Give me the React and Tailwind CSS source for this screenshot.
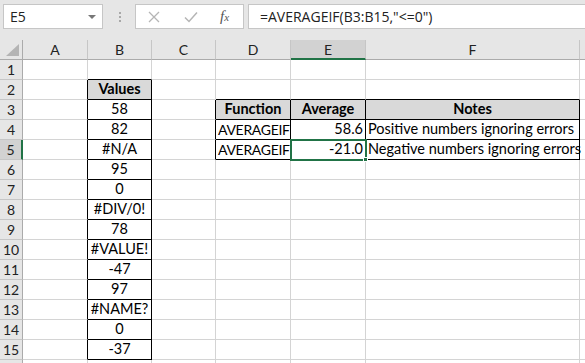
import React from 'react';

// column widths include the 1px right gridline
const COLS = [
  { k: 'A', w: 65 },
  { k: 'B', w: 64 },
  { k: 'C', w: 64 },
  { k: 'D', w: 75 },
  { k: 'E', w: 75 },
  { k: 'F', w: 214 },
];

const VALUES = ['58', '82', '#N/A', '95', '0', '#DIV/0!', '78', '#VALUE!', '-47', '97', '#NAME?', '0', '-37'];

// cells keyed "row-col" (col 0 = A)
const CELLS = {
  '2-1': { v: 'Values', head: true },
  '3-3': { v: 'Function', head: true },
  '3-4': { v: 'Average', head: true },
  '3-5': { v: 'Notes', head: true },
  '4-3': { v: 'AVERAGEIF', align: 'left', tight: true },
  '4-4': { v: '58.6', align: 'right' },
  '4-5': { v: 'Positive numbers ignoring errors', align: 'left' },
  '5-3': { v: 'AVERAGEIF', align: 'left', tight: true },
  '5-4': { v: '-21.0', align: 'right' },
  '5-5': { v: 'Negative numbers ignoring errors', align: 'left' },
};
VALUES.forEach((v, i) => {
  CELLS[`${i + 3}-1`] = { v, align: 'center' };
});

const inBox = (r, c) =>
  (c === 1 && r >= 2 && r <= 15) || (c >= 3 && c <= 5 && r >= 3 && r <= 5);

const ROWS = Array.from({ length: 16 }, (_, i) => i + 1);

function Cell({ r, c, w }) {
  const cell = CELLS[`${r}-${c}`];
  const right = inBox(r, c) || inBox(r, c + 1);
  const bottom = inBox(r, c) || inBox(r + 1, c);
  const selected = r === 5 && c === 4;

  let align = 'justify-center';
  if (cell?.align === 'left') align = 'justify-start';
  if (cell?.align === 'right') align = 'justify-end';

  return (
    <div
      className={`relative flex h-[20px] shrink-0 items-center border-r border-b px-[2px] ${align} ${
        right ? 'border-r-black' : 'border-r-[#d4d4d4]'
      } ${bottom ? 'border-b-black' : 'border-b-[#d4d4d4]'} ${cell?.head ? 'bg-[#d9d9d9] font-bold' : 'bg-white'}`}
      style={{ width: w }}
    >
      {cell && (
        <span className={`whitespace-nowrap leading-none ${cell.tight ? 'text-[14px] tracking-[-0.3px]' : ''}`}>
          {cell.v}
        </span>
      )}
      {selected && (
        <div className="absolute -left-[1px] -top-[1px] z-10 h-[22px] w-[77px] border-2 border-[#217346]">
          <div className="absolute -bottom-[3px] -right-[3px] h-[5px] w-[5px] border border-white bg-[#217346]" />
        </div>
      )}
    </div>
  );
}

export default function App() {
  return (
    <div className="h-[363px] w-[585px] overflow-hidden bg-[#e6e6e6]" style={{ fontFamily: 'Lato, sans-serif' }}>
      {/* Formula bar */}
      <div className="flex h-[40px] items-start pt-[4px] text-[14px]" style={{ fontFamily: '"Open Sans", sans-serif' }}>
        <div className="ml-[3px] flex h-[25px] w-[100px] items-center justify-between border border-[#c6c6c6] bg-white pl-[6px] pr-[6px] text-[#222]">
          <span>E5</span>
          <span className="h-0 w-0 border-x-[4px] border-t-[4px] border-x-transparent border-t-[#777]" />
        </div>
        <div className="ml-[16px] mt-[8px] flex flex-col gap-[2px]">
          <span className="h-[2px] w-[2px] bg-[#a8a8a8]" />
          <span className="h-[2px] w-[2px] bg-[#a8a8a8]" />
          <span className="h-[2px] w-[2px] bg-[#a8a8a8]" />
        </div>
        <div className="ml-[14px] flex h-[25px] w-[109px] items-center border border-[#c6c6c6] bg-white">
          <svg width="12" height="12" viewBox="0 0 12 12" className="ml-[12px]">
            <path d="M1 1 L11 11 M11 1 L1 11" stroke="#b5b5b5" strokeWidth="1.3" fill="none" />
          </svg>
          <svg width="14" height="12" viewBox="0 0 14 12" className="ml-[24px]">
            <path d="M1 6.5 L5 10.5 L13 1.5" stroke="#b5b5b5" strokeWidth="1.5" fill="none" />
          </svg>
          <span
            className="ml-[22px] text-[15px] italic text-[#555]"
            style={{ fontFamily: '"Liberation Serif", serif' }}
          >
            f<span className="text-[11px]">x</span>
          </span>
        </div>
        <div className="ml-[4px] flex h-[25px] flex-1 items-center border border-r-0 border-[#c6c6c6] bg-white pl-[11px] text-[#222]">
          =AVERAGEIF(B3:B15,"&lt;=0")
        </div>
      </div>

      {/* Column headers */}
      <div className="flex h-[20px] text-[14px] text-[#222]">
        <div className="relative h-[20px] w-[23px] shrink-0 border-r border-b border-[#ababab]">
          <svg width="13" height="12" viewBox="0 0 13 12" className="absolute bottom-[3px] right-[3px]">
            <path d="M13 0 L13 12 L0 12 Z" fill="#b4b4b4" />
          </svg>
        </div>
        {COLS.map((col) => (
          <div
            key={col.k}
            className={`flex h-[20px] shrink-0 items-center justify-center border-r border-r-[#c6c6c6] ${
              col.k === 'E' ? 'border-b-2 border-b-[#217346] bg-[#d2d2d2]' : 'border-b border-b-[#ababab]'
            }`}
            style={{ width: col.w }}
          >
            {col.k}
          </div>
        ))}
        <div className="h-[20px] flex-1 border-b border-[#ababab]" />
      </div>

      {/* Rows */}
      {ROWS.map((r) => (
        <div key={r} className="flex h-[20px] text-[14.5px] text-black">
          <div
            className={`flex h-[20px] w-[23px] shrink-0 items-center justify-center border-b border-b-[#c6c6c6] text-[14px] text-[#222] ${
              r === 5 ? 'border-r-2 border-r-[#217346] bg-[#d2d2d2]' : 'border-r border-r-[#ababab]'
            }`}
          >
            {r < 16 ? r : ''}
          </div>
          {COLS.map((col, c) => (
            <Cell key={col.k} r={r} c={c} w={col.w} />
          ))}
          <div className="h-[20px] flex-1 border-b border-[#d4d4d4] bg-white" />
        </div>
      ))}
    </div>
  );
}
